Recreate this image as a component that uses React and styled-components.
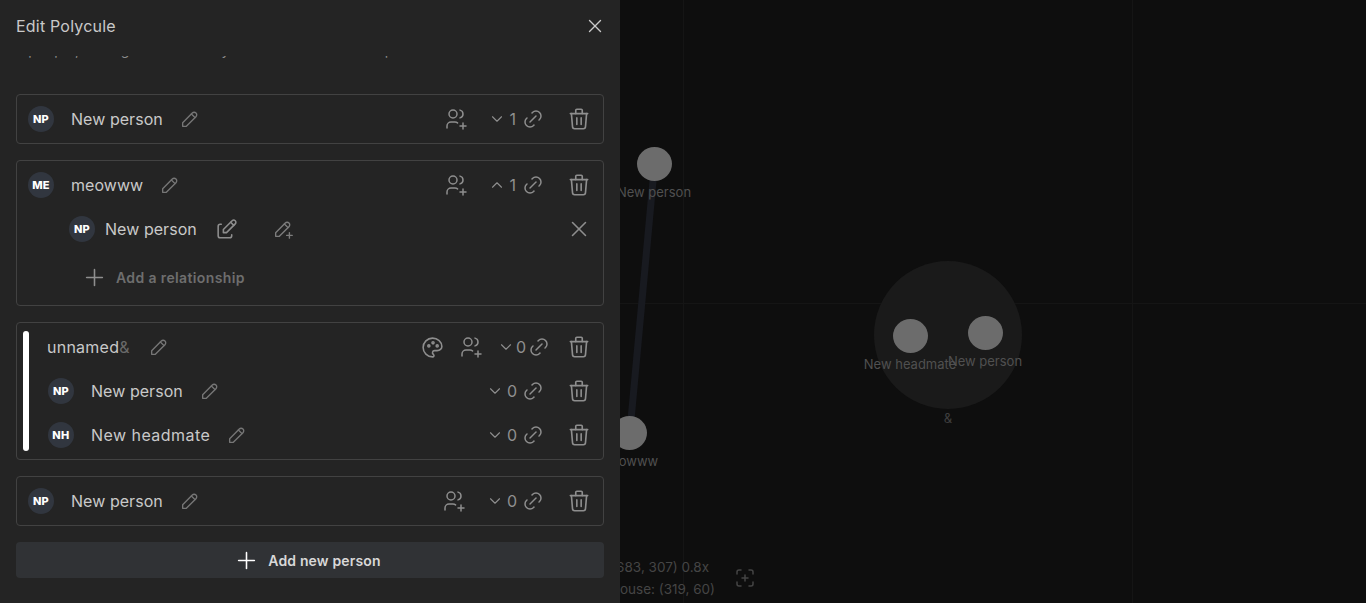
import React from "react";
import styled, { createGlobalStyle } from "styled-components";
import {
  TbChevronDown,
  TbChevronUp,
  TbEdit,
  TbLink,
  TbPalette,
  TbPencil,
  TbPencilPlus,
  TbPlus,
  TbTrash,
  TbUsersPlus,
  TbX,
} from "react-icons/tb";

const GlobalStyle = createGlobalStyle`
  html, body {
    margin: 0;
    height: 100%;
    overflow: hidden;
    background: #0e0e0e;
    font-family: "Inter", "Noto Sans", sans-serif;
  }
  * { box-sizing: border-box; }
`;

const Page = styled.div`
  position: relative;
  width: 100vw;
  height: 100vh;
  overflow: hidden;
`;

// Canvas behind the drawer
const Canvas = styled.div`
  position: absolute;
  inset: 0;
  background: #0e0e0e;
`;

const GridLine = styled.div`
  position: absolute;
  background: #151515;
  ${(p) => (p.$x ? `left:${p.$x}px;top:0;bottom:0;width:1px;` : `top:${p.$y}px;left:0;right:0;height:1px;`)}
`;

const Group = styled.div`
  position: absolute;
  left: 874px;
  top: 261px;
  width: 148px;
  height: 148px;
  border-radius: 50%;
  background: #1a1a1a;
`;

const Node = styled.div`
  position: absolute;
  left: ${(p) => p.$x - 17.5}px;
  top: ${(p) => p.$y - 17}px;
  width: 35px;
  height: 34px;
  border-radius: 50%;
  background: #6c6c6c;
`;

const NodeLabel = styled.div`
  position: absolute;
  left: ${(p) => p.$x}px;
  top: ${(p) => p.$y}px;
  transform: translateX(-50%);
  font-size: 13px;
  line-height: 16px;
  color: ${(p) => (p.$dim ? "#3f3f3f" : "#505050")};
  white-space: nowrap;
`;

const Edge = styled.svg`
  position: absolute;
  left: 620px;
  top: 170px;
`;

const Stats = styled.div`
  position: absolute;
  left: 500px;
  top: 556px;
  width: 215px;
  text-align: right;
  font-size: 13.5px;
  line-height: 22px;
  color: #454545;
  white-space: nowrap;
`;

const StatLine = styled.div`
  margin-right: ${(p) => p.$inset || 0}px;
`;

const FocusIcon = styled.svg`
  position: absolute;
  left: 735px;
  top: 568px;
`;

// Drawer
const Drawer = styled.aside`
  position: absolute;
  left: 0;
  top: 0;
  bottom: 0;
  width: 620px;
  background: #242424;
  display: flex;
  flex-direction: column;
`;

const Header = styled.header`
  height: 56px;
  flex: none;
  padding: 0 14px 4px 16px;
  display: flex;
  align-items: center;
  justify-content: space-between;
  background: #242424;
`;

const Title = styled.h2`
  margin: 0;
  font-size: 16px;
  font-weight: 400;
  letter-spacing: 0.2px;
  color: #c9c9c9;
`;

const CloseButton = styled.button`
  border: 0;
  padding: 0;
  background: none;
  color: #c9c9c9;
  display: flex;
`;

const Body = styled.div`
  flex: 1;
  min-height: 0;
  overflow: hidden;
  padding: 0 16px;
  display: flex;
  flex-direction: column;
  gap: 16px;
`;

// the list is scrolled a little, only the bottom of this text still shows
const IntroClip = styled.div`
  flex: none;
  height: 22px;
  overflow: hidden;
`;

const Intro = styled.p`
  margin: -17px 0 0;
  font-size: 14px;
  line-height: 22px;
  letter-spacing: 0.25px;
  color: #8c8c8c;
  white-space: nowrap;
`;

const Card = styled.section`
  flex: none;
  border: 1px solid #424242;
  border-radius: 4px;
  padding: 0 11px;
`;

const SystemCard = styled.section`
  flex: none;
  border: 1px solid #424242;
  border-radius: 4px;
  padding: 8px 11px 8px 6px;
  display: flex;
  gap: 18px;
`;

const SideBar = styled.div`
  width: 6px;
  flex: none;
  border-radius: 3px;
  background: #fff;
`;

const SystemRows = styled.div`
  flex: 1;
  min-width: 0;
  display: flex;
  flex-direction: column;
  gap: 12px;
`;

const Row = styled.div`
  height: ${(p) => p.$height || 48}px;
  display: flex;
  align-items: center;
  padding-left: ${(p) => p.$indent || 0}px;
`;

const Avatar = styled.div`
  width: 26px;
  height: 26px;
  flex: none;
  border-radius: 50%;
  background: #31363f;
  color: #fff;
  font-size: 11px;
  font-weight: 800;
  letter-spacing: 0.3px;
  padding-bottom: 1px;
  display: flex;
  align-items: center;
  justify-content: center;
`;

const Name = styled.span`
  margin-left: ${(p) => p.$gap ?? 17}px;
  font-size: 16px;
  letter-spacing: ${(p) => p.$tracking ?? 0.05}px;
  color: #c9c9c9;
  white-space: nowrap;
`;

const Muted = styled.span`
  color: #6a6a6a;
`;

const IconSlot = styled.span`
  margin-left: ${(p) => p.$gap ?? 0}px;
  flex: none;
  display: inline-flex;
  color: ${(p) => p.$color || "#8e8e8e"};
`;

const Spacer = styled.div`
  flex: 1;
`;

const Count = styled.span`
  margin-left: ${(p) => p.$gap ?? 3}px;
  font-size: 16px;
  color: #8f8f8f;
  flex: none;
`;

const AddRelationship = styled.div`
  height: 56px;
  margin-left: 53px;
  display: flex;
  align-items: center;
  gap: 8px;
  font-size: 14px;
  font-weight: 600;
  color: #6e6e6e;
  letter-spacing: 0.37px;
`;

const AddButton = styled.button`
  flex: none;
  height: 36px;
  border: 0;
  border-radius: 4px;
  padding: 0 6px 0 0;
  background: #303235;
  color: #d8d8d8;
  font-family: inherit;
  font-size: 14px;
  font-weight: 600;
  letter-spacing: 0.15px;
  display: flex;
  align-items: center;
  justify-content: center;
  gap: 8px;
`;

const Tail = ({ open, count, user = true, palette, userGap, chevronGap = 20, countGap, linkGap = 4, trashGap = 21 }) => (
  <>
    <Spacer />
    {palette && (
      <IconSlot>
        <TbPalette size={25} strokeWidth={1.5} />
      </IconSlot>
    )}
    {user && (
      <IconSlot $gap={userGap}>
        <TbUsersPlus size={24} strokeWidth={1.5} />
      </IconSlot>
    )}
    <IconSlot $gap={chevronGap}>
      {open ? <TbChevronUp size={18} strokeWidth={1.5} /> : <TbChevronDown size={18} strokeWidth={1.5} />}
    </IconSlot>
    <Count $gap={countGap}>{count}</Count>
    <IconSlot $gap={linkGap}>
      <TbLink size={24} strokeWidth={1.5} />
    </IconSlot>
    <IconSlot $gap={trashGap}>
      <TbTrash size={26} strokeWidth={1.5} />
    </IconSlot>
  </>
);

const Pencil = ({ gap = 16 }) => (
  <IconSlot $gap={gap} $color="#767676">
    <TbPencil size={22} strokeWidth={1.5} />
  </IconSlot>
);

export default function App() {
  return (
    <Page>
      <GlobalStyle />
      <Canvas>
        <GridLine $x={683} />
        <GridLine $x={1132} />
        <GridLine $y={303} />
        <Edge width="60" height="260">
          <line x1="34" y1="0" x2="11" y2="250" stroke="#181a20" strokeWidth="7" />
        </Edge>
        <Group />
        <Node $x={654} $y={164} />
        <NodeLabel $x={654} $y={184}>New person</NodeLabel>
        <Node $x={629} $y={433} />
        <NodeLabel $x={629} $y={453}>meowww</NodeLabel>
        <Node $x={910} $y={336} />
        <NodeLabel $x={910} $y={356}>New headmate</NodeLabel>
        <Node $x={985} $y={333} />
        <NodeLabel $x={985} $y={353}>New person</NodeLabel>
        <NodeLabel $x={948} $y={410} $dim>&amp;</NodeLabel>
        <Stats>
          <StatLine $inset={6}>Center: (683, 307) 0.8x</StatLine>
          <StatLine>Mouse: (319, 60)</StatLine>
        </Stats>
        <FocusIcon width="20" height="20" viewBox="0 0 20 20" fill="none" stroke="#444" strokeWidth="1.5" strokeLinecap="round">
          <path d="M2 6V4a2 2 0 0 1 2-2h2M14 2h2a2 2 0 0 1 2 2v2M18 14v2a2 2 0 0 1-2 2h-2M6 18H4a2 2 0 0 1-2-2v-2M7 10h6M10 7v6" />
        </FocusIcon>
      </Canvas>

      <Drawer>
        <Header>
          <Title>Edit Polycule</Title>
          <CloseButton>
            <TbX size={22} strokeWidth={1.5} />
          </CloseButton>
        </Header>
        <Body>
          <IntroClip>
            <Intro>a people, manage their friendly links and all the other parts.</Intro>
          </IntroClip>

          <Card>
            <Row>
              <Avatar>NP</Avatar>
              <Name>New person</Name>
              <Pencil />
              <Tail count="1" linkGap={5} />
            </Row>
          </Card>

          <Card>
            <Row>
              <Avatar>ME</Avatar>
              <Name>meowww</Name>
              <Pencil />
              <Tail count="1" open linkGap={5} />
            </Row>
            <Row $height={40} $indent={41}>
              <Avatar>NP</Avatar>
              <Name $gap={10}>New person</Name>
              <IconSlot $gap={17}>
                <TbEdit size={25} strokeWidth={1.5} />
              </IconSlot>
              <IconSlot $gap={33} $color="#7d7d7d">
                <TbPencilPlus size={22} strokeWidth={1.5} />
              </IconSlot>
              <Spacer />
              <IconSlot>
                <TbX size={26} strokeWidth={1.4} />
              </IconSlot>
            </Row>
            <AddRelationship>
              <TbPlus size={27} strokeWidth={1.4} color="#8e8e8e" />
              Add a relationship
            </AddRelationship>
          </Card>

          <SystemCard>
            <SideBar />
            <SystemRows>
              <Row $height={32}>
                <Name $gap={0} $tracking={0.25}>
                  unnamed<Muted>&amp;</Muted>
                </Name>
                <Pencil gap={18} />
                <Tail count="0" palette userGap={14} chevronGap={14} countGap={1} linkGap={1} trashGap={15} />
              </Row>
              <Row $height={32} $indent={1}>
                <Avatar>NP</Avatar>
                <Name>New person</Name>
                <Pencil />
                <Tail count="0" user={false} />
              </Row>
              <Row $height={32} $indent={1}>
                <Avatar>NH</Avatar>
                <Name $tracking={0.45}>New headmate</Name>
                <Pencil />
                <Tail count="0" user={false} />
              </Row>
            </SystemRows>
          </SystemCard>

          <Card>
            <Row>
              <Avatar>NP</Avatar>
              <Name>New person</Name>
              <Pencil />
              <Tail count="0" />
            </Row>
          </Card>

          <AddButton>
            <TbPlus size={27} strokeWidth={1.4} color="#fff" />
            Add new person
          </AddButton>
        </Body>
      </Drawer>
    </Page>
  );
}
